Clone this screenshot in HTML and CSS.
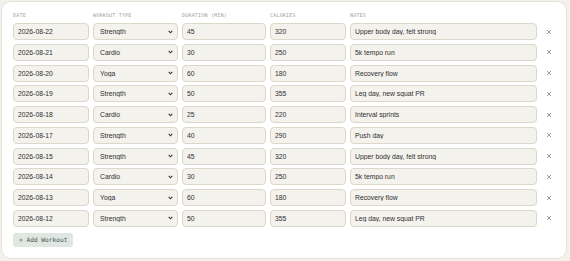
FILE: index.html
```html
<!DOCTYPE html>
<html lang="en">
<head>
    <meta charset="UTF-8">
    <meta name="viewport" content="width=device-width, initial-scale=1.0">
    <title>Workout Log</title>
    <link rel="stylesheet" href="styles.css">
</head>
<body>
    <div class="card">
        <div class="row head">
            <span>Date</span>
            <span>Workout Type</span>
            <span>Duration (min)</span>
            <span>Calories</span>
            <span>Notes</span>
            <span></span>
        </div>

        <div id="rows" class="rows"></div>

        <button type="button" id="addButton" class="add-btn">+ Add Workout</button>
    </div>

    <script>
        const workouts = [
            ['2026-08-22', 'Strength', 45, 320, 'Upper body day, felt strong'],
            ['2026-08-21', 'Cardio', 30, 250, '5k tempo run'],
            ['2026-08-20', 'Yoga', 60, 180, 'Recovery flow'],
            ['2026-08-19', 'Strength', 50, 355, 'Leg day, new squat PR'],
            ['2026-08-18', 'Cardio', 25, 220, 'Interval sprints'],
            ['2026-08-17', 'Strength', 40, 290, 'Push day'],
            ['2026-08-15', 'Strength', 45, 320, 'Upper body day, felt strong'],
            ['2026-08-14', 'Cardio', 30, 250, '5k tempo run'],
            ['2026-08-13', 'Yoga', 60, 180, 'Recovery flow'],
            ['2026-08-12', 'Strength', 50, 355, 'Leg day, new squat PR']
        ];
        const types = ['Strength', 'Cardio', 'Yoga'];
        const chevron = '<svg class="chevron" width="5" height="4" viewBox="0 0 5 4">' +
            '<path d="M0.7 0.9 L2.5 2.8 L4.3 0.9" fill="none" stroke="#333" stroke-width="1.1"/></svg>';
        const cross = '<svg width="6" height="6" viewBox="0 0 6 6">' +
            '<path d="M1 1 L5 5 M5 1 L1 5" stroke="#8f8f8b" stroke-width="0.9"/></svg>';

        function renderRows() {
            const wrap = document.getElementById('rows');
            wrap.innerHTML = '';
            workouts.forEach((w, i) => {
                const row = document.createElement('div');
                row.className = 'row';
                const options = types.map(t =>
                    '<option' + (t === w[1] ? ' selected' : '') + '>' + t + '</option>').join('');
                row.innerHTML =
                    '<input type="text" value="' + w[0] + '">' +
                    '<div class="select-wrap"><select>' + options + '</select>' + chevron + '</div>' +
                    '<input type="text" value="' + w[2] + '">' +
                    '<input type="text" value="' + w[3] + '">' +
                    '<input type="text" value="' + w[4] + '">' +
                    '<button type="button" class="remove" aria-label="Remove">' + cross + '</button>';
                row.querySelector('.remove').addEventListener('click', function() {
                    workouts.splice(i, 1);
                    renderRows();
                });
                wrap.appendChild(row);
            });
        }

        document.getElementById('addButton').addEventListener('click', function() {
            workouts.push(['', 'Strength', '', '', '']);
            renderRows();
        });

        renderRows();
    </script>
</body>
</html>
```

FILE: styles.css
```css
body {
    margin: 0;
    padding: 1px 3px 2px 1px;
    background-color: #f4f2ec;
    font-family: "Liberation Sans", Arial, sans-serif;
}
.card {
    background: #fff;
    border: 1px solid #e6e2d7;
    border-radius: 10px;
    padding: 8px 9px 12px 11px;
    height: 236px;
}
.row {
    display: grid;
    grid-template-columns: 76px 85px 84px 76px 187px 20px;
    column-gap: 4px;
    align-items: center;
}
.head {
    height: 10px;
    margin-bottom: 3px;
}
.head span {
    font-family: "DejaVu Sans Mono", monospace;
    font-size: 5px;
    text-transform: uppercase;
    letter-spacing: 0.2px;
    color: #a09f99;
}
.rows {
    display: flex;
    flex-direction: column;
    gap: 3.78px;
}
input, select {
    display: block;
    box-sizing: border-box;
    height: 17px;
    padding: 0 4px;
    font-family: "Liberation Sans", Arial, sans-serif;
    font-size: 6.8px;
    color: #2f2f2f;
    background-color: #f4f2ed;
    border: 1px solid #dcd7cb;
    border-radius: 4px;
    min-width: 0;
    width: 100%;
}
.select-wrap {
    position: relative;
    height: 17px;
}
select {
    appearance: none;
    padding: 0 12px 0 6px;
}
.chevron {
    position: absolute;
    right: 5px;
    top: 6.5px;
    pointer-events: none;
}
.remove {
    display: flex;
    align-items: center;
    justify-content: center;
    background: none;
    border: none;
    padding: 0;
    cursor: pointer;
    justify-self: start;
    margin-left: 2px;
    width: 12px;
    height: 12px;
}
.add-btn {
    margin-top: 6px;
    height: 14px;
    padding: 0 6px;
    font-family: "DejaVu Sans Mono", monospace;
    font-size: 6.2px;
    color: #46524e;
    background-color: #dfe7e3;
    border: none;
    border-radius: 3px;
    cursor: pointer;
}
```
